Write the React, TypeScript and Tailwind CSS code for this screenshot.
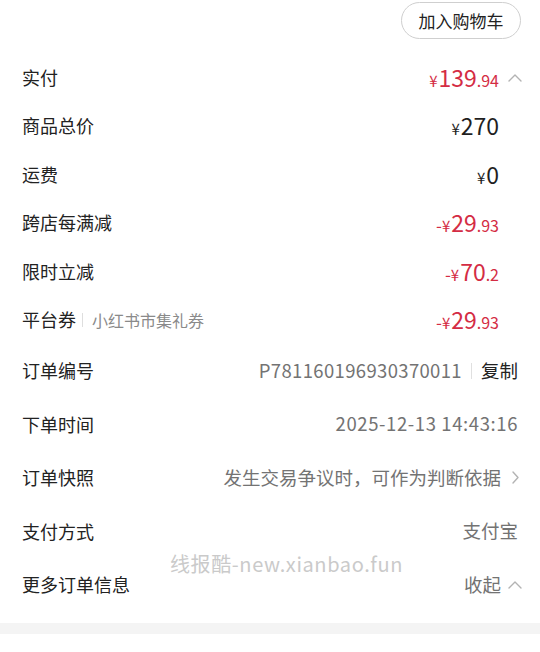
import React from "react";

const FONT = "font-['Noto_Sans_CJK_SC','Noto_Sans',sans-serif]";
const RED = "text-[#d42c44]";

function ChevronUp() {
  return (
    <svg width="14" height="9" viewBox="0 0 14 9" fill="none" className="shrink-0">
      <path d="M1 8 L7 2 L13 8" stroke="#b3b3b3" strokeWidth="1.4" strokeLinecap="round" strokeLinejoin="round" />
    </svg>
  );
}

function ChevronRight() {
  return (
    <svg width="7" height="13" viewBox="0 0 7 13" fill="none" className="shrink-0">
      <path d="M1 1 L6 6.5 L1 12" stroke="#b3b3b3" strokeWidth="1.4" strokeLinecap="round" strokeLinejoin="round" />
    </svg>
  );
}

function Price({ minus, int, dec, red }: { minus?: boolean; int: string; dec?: string; red?: boolean }) {
  return (
    <span className={`flex items-baseline ${red ? RED : "text-[#1f1f1f]"}`}>
      {minus && <span className="text-[17px] leading-none">-</span>}
      <span className="text-[15px] leading-none mr-[1px]">¥</span>
      <span className="text-[23px] leading-none">{int}</span>
      {dec && <span className="text-[16px] leading-none">{dec}</span>}
    </span>
  );
}

function PriceRow({ label, children, chevron }: { label: React.ReactNode; children: React.ReactNode; chevron?: boolean }) {
  return (
    <div className="flex h-[48.5px] items-center justify-between pl-[22px] pr-[18px]">
      <div className="flex items-center text-[18px] text-[#222]">{label}</div>
      <div className="flex items-center">
        {children}
        <div className="ml-[9px] flex w-[14px] justify-center">{chevron && <ChevronUp />}</div>
      </div>
    </div>
  );
}

function InfoRow({ label, children }: { label: string; children: React.ReactNode }) {
  return (
    <div className="flex h-[53.5px] items-center justify-between pl-[22px] pr-[22px]">
      <div className="text-[18px] text-[#222]">{label}</div>
      <div className="flex items-center text-[18.5px] text-[#737373]">{children}</div>
    </div>
  );
}

export default function App() {
  return (
    <div className={`relative h-[652px] w-[540px] overflow-hidden bg-white ${FONT}`}>
      {/* top action */}
      <div className="flex justify-end pr-[19px] pt-[2px]">
        <button className="flex h-[37px] w-[120px] items-center justify-center rounded-full border border-[#cfcfcf] text-[17px] text-[#222]">
          加入购物车
        </button>
      </div>

      {/* price breakdown */}
      <div className="mt-[14px]">
        <PriceRow label="实付" chevron>
          <Price red int="139" dec=".94" />
        </PriceRow>
        <PriceRow label="商品总价">
          <Price int="270" />
        </PriceRow>
        <PriceRow label="运费">
          <Price int="0" />
        </PriceRow>
        <PriceRow label="跨店每满减">
          <Price red minus int="29" dec=".93" />
        </PriceRow>
        <PriceRow label="限时立减">
          <Price red minus int="70" dec=".2" />
        </PriceRow>
        <PriceRow
          label={
            <>
              <span>平台券</span>
              <span className="ml-[6px] mr-[9px] h-[14px] w-px bg-[#dedede]" />
              <span className="text-[16px] text-[#8a8a8a]">小红书市集礼券</span>
            </>
          }
        >
          <Price red minus int="29" dec=".93" />
        </PriceRow>
      </div>

      {/* order info */}
      <div>
        <InfoRow label="订单编号">
          <span className="tracking-[0.35px]">P781160196930370011</span>
          <span className="mx-[9px] h-[16px] w-px bg-[#e0e0e0]" />
          <span className="text-[#222]">复制</span>
        </InfoRow>
        <InfoRow label="下单时间">
          <span className="tracking-[0.6px]">2025-12-13 14:43:16</span>
        </InfoRow>
        <InfoRow label="订单快照">
          <span>发生交易争议时，可作为判断依据</span>
          <span className="ml-[11px] mr-[-1px]">
            <ChevronRight />
          </span>
        </InfoRow>
        <InfoRow label="支付方式">
          <span>支付宝</span>
        </InfoRow>
        <InfoRow label="更多订单信息">
          <span>收起</span>
          <span className="ml-[7px] mr-[-4px]">
            <ChevronUp />
          </span>
        </InfoRow>
      </div>

      <div className="mt-[11px] h-[11px] bg-[#f4f4f4]" />

      {/* watermark */}
      <div className="pointer-events-none absolute left-[170px] top-[554px] text-[20px] leading-none tracking-[0.6px] text-[#cacaca]">
        线报酷-new.xianbao.fun
      </div>
    </div>
  );
}
